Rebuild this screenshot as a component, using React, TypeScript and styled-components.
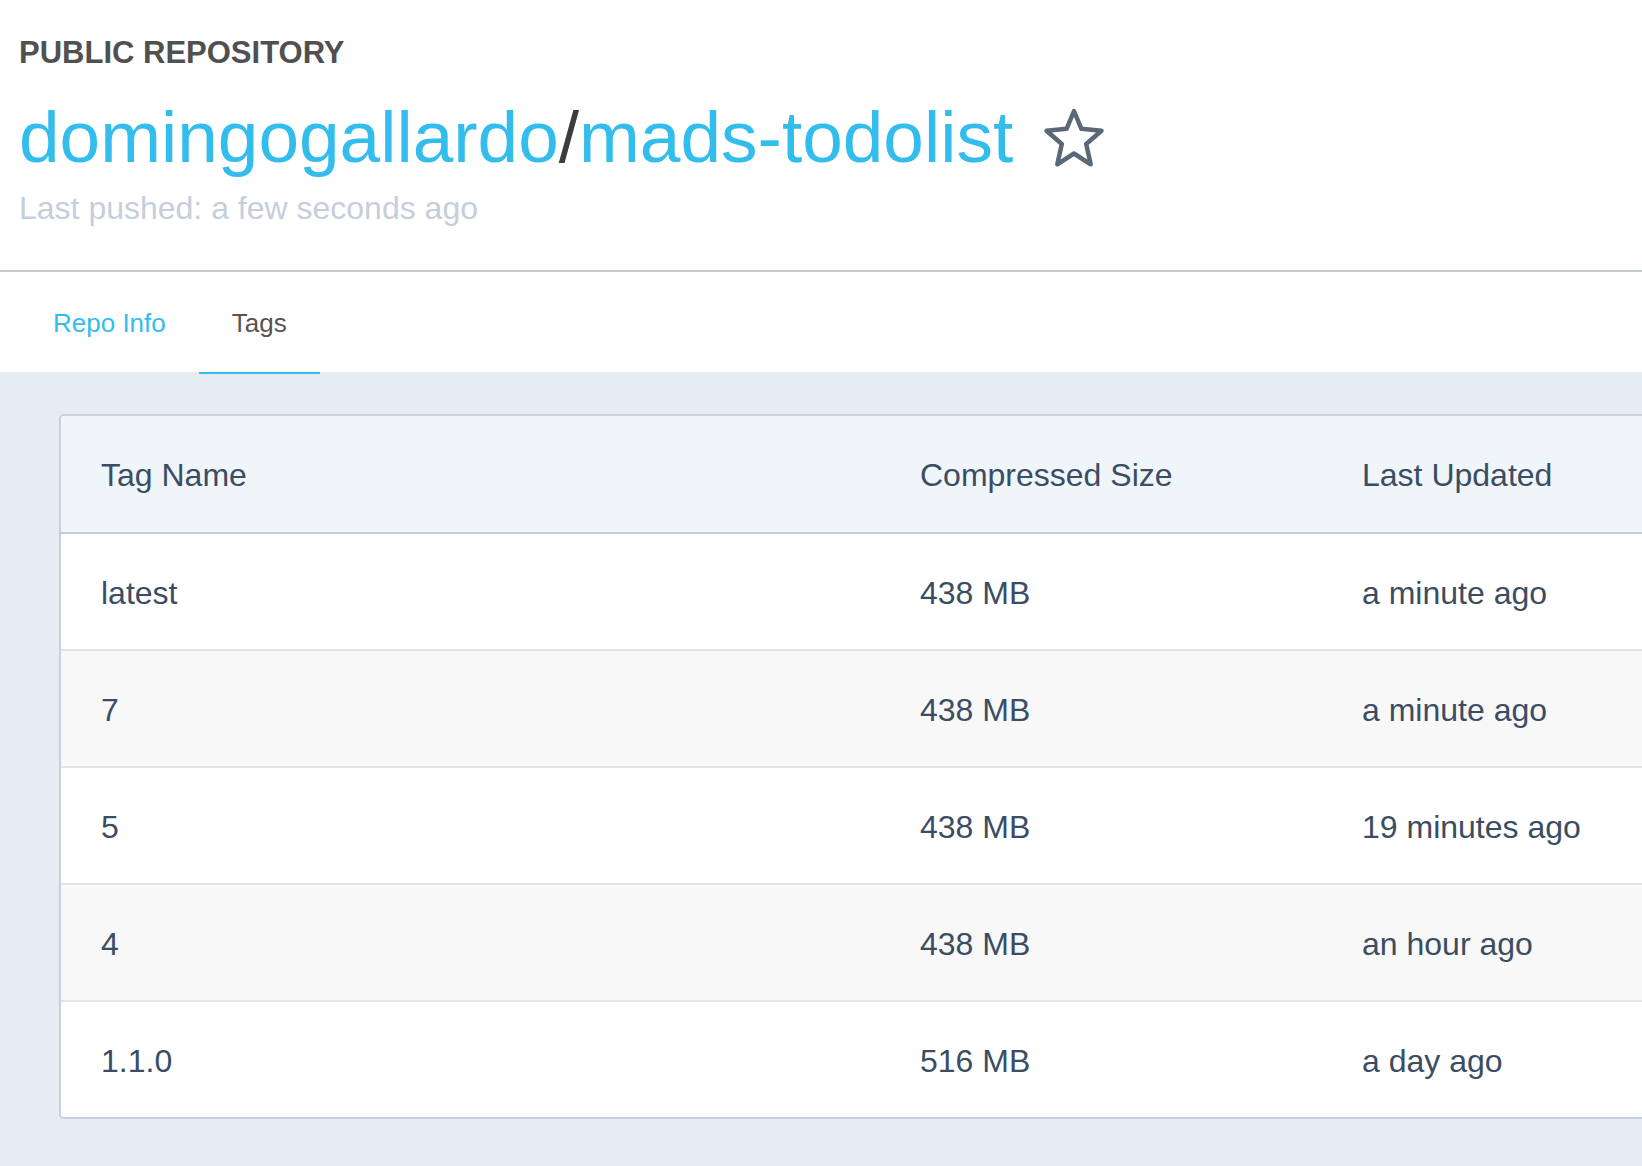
import React from 'react';
import styled, { createGlobalStyle } from 'styled-components';

const GlobalStyle = createGlobalStyle`
  html, body {
    margin: 0;
    padding: 0;
    overflow: hidden;
    background: #fff;
  }
  body {
    font-family: "Liberation Sans", Arial, Helvetica, sans-serif;
  }
`;

const Page = styled.div`
  display: flex;
  flex-direction: column;
  min-height: 100vh;
  width: 100%;
`;

const Header = styled.div`
  display: flex;
  flex-direction: column;
  padding: 35px 0 43px 19px;
  border-bottom: 2px solid #c3cbd5;
  background: #fff;
`;

const Kicker = styled.div`
  font-size: 31px;
  line-height: 36px;
  font-weight: bold;
  color: #505050;
`;

const TitleRow = styled.div`
  display: flex;
  align-items: center;
  margin-top: 24px;
  height: 84px;
`;

const Title = styled.div`
  font-size: 73px;
  line-height: 84px;
  color: #33bdec;
  white-space: nowrap;
`;

const Slash = styled.span`
  color: #3c3c3c;
`;

const StarButton = styled.div`
  display: flex;
  margin-left: 30px;
  margin-top: 2px;
  cursor: pointer;
`;

const Pushed = styled.div`
  margin-top: 11px;
  font-size: 32px;
  line-height: 37px;
  color: #c6cedb;
`;

const TabBar = styled.div`
  display: flex;
  height: 100px;
  padding-left: 20px;
  background: #fff;
  position: relative;
  z-index: 1;
`;

const Tab = styled.div<{ $active?: boolean }>`
  display: flex;
  align-items: center;
  height: 102px;
  margin-bottom: -2px;
  padding: 0 33px;
  box-sizing: border-box;
  padding-top: 2px;
  border-bottom: 2px solid ${(p) => (p.$active ? '#33bdec' : 'transparent')};
  font-size: 26px;
  line-height: 30px;
  color: ${(p) => (p.$active ? '#555' : '#33bdec')};
  cursor: pointer;
`;

const Content = styled.div`
  flex: 1;
  background: #e5ecf4;
  padding: 42px 0 48px 59px;
`;

const Card = styled.div`
  width: 1700px;
  border: 2px solid #c7d0dc;
  border-radius: 5px;
  overflow: hidden;
  background: #fff;
`;

const Row = styled.div<{ $head?: boolean; $alt?: boolean; $last?: boolean }>`
  display: grid;
  grid-template-columns: 819px 442px 1fr;
  align-items: center;
  height: ${(p) => (p.$head ? 116 : 115)}px;
  background: ${(p) => (p.$head ? '#f0f5fa' : p.$alt ? '#f8f8f8' : '#fff')};
  border-bottom: ${(p) =>
    p.$last ? 'none' : p.$head ? '2px solid #c5cdd9' : '2px solid #e4e4e4'};
`;

const Cell = styled.div`
  padding: 0 40px;
  padding-top: 3px;
  font-size: 32px;
  line-height: 37px;
  color: #3b4d63;
  white-space: nowrap;
`;

const Star = () => (
  <svg width="62" height="60" viewBox="0 0 62 60">
    <polygon
      points="31,3 38.4,20.8 58.5,22.7 43.2,36 47.7,56.3 31,45.5 14.3,56.3 18.8,36 3.5,22.7 23.6,20.8"
      fill="none"
      stroke="#5a6878"
      strokeWidth="4.5"
      strokeLinejoin="round"
    />
  </svg>
);

const tags = [
  { name: 'latest', size: '438 MB', updated: 'a minute ago' },
  { name: '7', size: '438 MB', updated: 'a minute ago' },
  { name: '5', size: '438 MB', updated: '19 minutes ago' },
  { name: '4', size: '438 MB', updated: 'an hour ago' },
  { name: '1.1.0', size: '516 MB', updated: 'a day ago' },
];

function App() {
  return (
    <Page>
      <GlobalStyle />
      <Header>
        <Kicker>PUBLIC REPOSITORY</Kicker>
        <TitleRow>
          <Title>
            domingogallardo<Slash>/</Slash>mads-todolist
          </Title>
          <StarButton>
            <Star />
          </StarButton>
        </TitleRow>
        <Pushed>Last pushed: a few seconds ago</Pushed>
      </Header>
      <TabBar>
        <Tab>Repo Info</Tab>
        <Tab $active>Tags</Tab>
      </TabBar>
      <Content>
        <Card>
          <Row $head>
            <Cell>Tag Name</Cell>
            <Cell>Compressed Size</Cell>
            <Cell>Last Updated</Cell>
          </Row>
          {tags.map((t, i) => (
            <Row key={t.name} $alt={i % 2 === 1} $last={i === tags.length - 1}>
              <Cell>{t.name}</Cell>
              <Cell>{t.size}</Cell>
              <Cell>{t.updated}</Cell>
            </Row>
          ))}
        </Card>
      </Content>
    </Page>
  );
}

export default App;
